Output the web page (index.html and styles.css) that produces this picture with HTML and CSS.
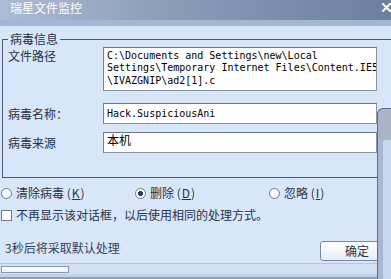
FILE: index.html
```html
<!DOCTYPE html>
<html lang="zh-CN">
<head>
<meta charset="utf-8">
<title>瑞星文件监控</title>
<link rel="stylesheet" href="styles.css">
</head>
<body>
<div class="win">
  <div class="titlebar">
    <span class="title">瑞星文件监控</span>
    <svg class="close" width="9" height="9" viewBox="0 0 9 9"><path d="M1 1 L8 8 M8 1 L1 8" stroke="#ffffff" stroke-width="2" stroke-linecap="square"/></svg>
  </div>
  <div class="strip"></div>
  <fieldset class="group">
    <legend>病毒信息</legend>
    <div class="row row-path">
      <span class="label">文件路径</span>
      <div class="box box-path">C:\Documents and Settings\new\Local
Settings\Temporary Internet Files\Content.IE5
\IVAZGNIP\ad2[1].c</div>
    </div>
    <div class="row row-name">
      <span class="label">病毒名称：</span>
      <div class="box box-name">Hack.SuspiciousAni</div>
    </div>
    <div class="row row-src">
      <span class="label">病毒来源</span>
      <div class="box box-src">本机</div>
    </div>
  </fieldset>
  <div class="options">
    <div class="opt"><span class="radio"></span><span>清除病毒 <span class="key">(<u>K</u>)</span></span></div>
    <div class="opt"><span class="radio on"></span><span>删除 <span class="key">(<u>D</u>)</span></span></div>
    <div class="opt"><span class="radio"></span><span>忽略 <span class="key">(<u>I</u>)</span></span></div>
  </div>
  <div class="check"><span class="checkbox"></span><span>不再显示该对话框，以后使用相同的处理方式。</span></div>
  <div class="footer">
    <span class="countdown">3秒后将采取默认处理</span>
    <button class="ok">确定</button>
  </div>
  <div class="status"><div class="progress"></div></div>
  <div class="overlay"><div class="overlay-inner"></div></div>
</div>
</body>
</html>
```
FILE: styles.css
```css
* { box-sizing: border-box; }
html, body { margin: 0; padding: 0; }
body {
  width: 391px;
  height: 279px;
  overflow: hidden;
  background: #d8e6f9;
  font-family: "Noto Sans CJK SC", sans-serif;
  font-size: 12px;
  color: #26334a;
}
.win {
  position: relative;
  width: 391px;
  height: 279px;
  overflow: hidden;
  background: #d8e6f9;
}
.titlebar {
  height: 20px;
  display: flex;
  justify-content: space-between;
  align-items: flex-start;
  padding: 2px 0 0 10px;
  background: linear-gradient(90deg, #adbcd5 0%, #8a9bb8 45%, #6c7f9e 100%);
}
.title {
  color: #ffffff;
  font-size: 12px;
  line-height: 12px;
}
.close { margin-top: 1px; flex: none; }
.strip {
  height: 6px;
  background: #a3b6d4;
}
.group {
  margin: 7px 0 0 2px;
  width: 400px;
  min-width: 0;
  padding: 0 0 24px 5px;
  border: 1px solid #4a5870;
}
.group legend {
  padding: 0 2px;
  font-size: 12px;
  line-height: 12px;
}
.row {
  display: flex;
  align-items: center;
}
.label {
  width: 95px;
  flex: none;
  line-height: 14px;
}
.row-path { align-items: flex-start; margin-top: 2px; }
.row-path .label { margin-top: 2px; }
.row-name { margin-top: 12px; }
.row-src { margin-top: 8px; }
.box {
  width: 274px;
  flex: none;
  background: #ffffff;
  border: 1px solid #8a94a6;
  border-top-color: #6c7689;
  border-left-color: #76808f;
  color: #000000;
  overflow: hidden;
}
.box-path {
  height: 44px;
  padding: 2px 0 0 3px;
  font-family: "DejaVu Sans Mono", monospace;
  font-size: 10px;
  line-height: 12.3px;
  white-space: pre;
}
.box-name {
  height: 21px;
  padding: 0 0 0 3px;
  font-family: "DejaVu Sans Mono", monospace;
  font-size: 10px;
  line-height: 20px;
}
.box-src {
  height: 21px;
  padding: 0 0 0 3px;
  font-size: 12px;
  line-height: 14px;
}
.options {
  display: grid;
  grid-template-columns: 134px 134px auto;
  margin-top: 8px;
  padding-left: 1px;
  line-height: 14px;
}
.opt {
  display: flex;
  align-items: center;
  gap: 4px;
}
.radio {
  width: 11px;
  height: 11px;
  flex: none;
  border-radius: 50%;
  border: 1px solid #6f7a8e;
  background: radial-gradient(circle at 40% 35%, #ffffff 0, #ffffff 40%, #e4eaf3 100%);
}
.radio.on {
  background: radial-gradient(circle, #2f3b52 0, #2f3b52 2.3px, #ffffff 2.8px, #ffffff 100%);
}
.key { font-size: 12px; letter-spacing: 1px; }
.check {
  display: flex;
  align-items: center;
  gap: 4px;
  margin-top: 8px;
  padding-left: 1px;
  line-height: 14px;
}
.checkbox {
  width: 11px;
  height: 11px;
  flex: none;
  border: 1px solid #6f7a8e;
  background: #ffffff;
}
.footer {
  display: flex;
  justify-content: space-between;
  align-items: flex-start;
  margin-top: 19px;
  padding-left: 5px;
}
.countdown { line-height: 14px; color: #34425a; }
.ok {
  width: 74px;
  height: 20px;
  margin-right: -3px;
  padding: 0;
  border: 1px solid #7787a5;
  border-radius: 3px;
  background: linear-gradient(#ffffff, #e6edf8);
  font-family: "Noto Sans CJK SC", sans-serif;
  font-size: 12px;
  line-height: 18px;
  color: #26334a;
}
.status {
  margin-top: 2px;
  height: 16px;
  border-top: 1px solid #b7c6dd;
  padding: 2px 0 0 1px;
  background: linear-gradient(#d3e0f3 0, #d3e0f3 10px, #c3d1e7 10px, #c3d1e7 13px, #8d9cb9 13px);
}
.progress {
  width: 68px;
  height: 7px;
  border: 1px solid #8a99b3;
  background: linear-gradient(#ffffff, #eef3fa);
}
.overlay {
  position: absolute;
  left: 377px;
  top: 108px;
  width: 24px;
  bottom: 0;
  border-left: 1px solid #5b6b89;
  border-top: 1px solid #5b6b89;
  border-top-left-radius: 6px;
  background: linear-gradient(#aab4c6 0, #aab4c6 31px, #a6b8d3 31px);
  padding: 31px 0 0 5px;
}
.overlay-inner {
  height: 100%;
  background: #c9d8ef;
  border-top-left-radius: 3px;
}
```
